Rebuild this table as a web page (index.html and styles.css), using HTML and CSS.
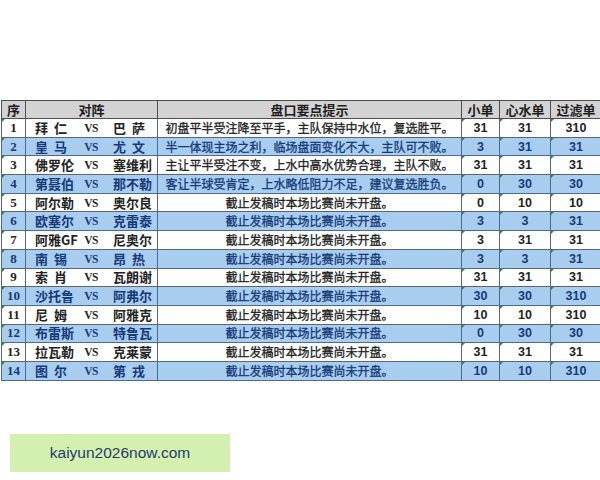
FILE: index.html
```html
<!DOCTYPE html>
<html lang="zh">
<head>
<meta charset="utf-8">
<link rel="stylesheet" href="styles.css">
</head>
<body>
<div class="page">
  <table class="sheet">
    <colgroup>
      <col class="c-no"><col class="c-team"><col class="c-tip"><col class="c-a"><col class="c-b"><col class="c-c">
    </colgroup>
    <thead>
      <tr><th>序</th><th>对阵</th><th>盘口要点提示</th><th>小单</th><th>心水单</th><th>过滤单</th></tr>
    </thead>
    <tbody>
      <tr><td class="no">1</td><td><div class="match"><span class="tm">拜仁</span><span class="vs">VS</span><span class="tm">巴萨</span></div></td><td class="tip">初盘平半受注降至平手，主队保持中水位，复选胜平。</td><td class="n">31</td><td class="n">31</td><td class="n">310</td></tr>
      <tr class="alt"><td class="no">2</td><td><div class="match"><span class="tm">皇马</span><span class="vs">VS</span><span class="tm">尤文</span></div></td><td class="tip">半一体现主场之利，临场盘面变化不大，主队可不败。</td><td class="n">3</td><td class="n">31</td><td class="n">31</td></tr>
      <tr><td class="no">3</td><td><div class="match"><span class="tm">佛罗伦</span><span class="vs">VS</span><span class="tm">塞维利</span></div></td><td class="tip">主让平半受注不变，上水中高水优势合理，主队不败。</td><td class="n">31</td><td class="n">31</td><td class="n">31</td></tr>
      <tr class="alt"><td class="no">4</td><td><div class="match"><span class="tm">第聂伯</span><span class="vs">VS</span><span class="tm">那不勒</span></div></td><td class="tip">客让半球受肯定，上水略低阻力不足，建议复选胜负。</td><td class="n">0</td><td class="n">30</td><td class="n">30</td></tr>
      <tr><td class="no">5</td><td><div class="match"><span class="tm">阿尔勒</span><span class="vs">VS</span><span class="tm">奥尔良</span></div></td><td class="tip">截止发稿时本场比赛尚未开盘。</td><td class="n">0</td><td class="n">10</td><td class="n">10</td></tr>
      <tr class="alt"><td class="no">6</td><td><div class="match"><span class="tm">欧塞尔</span><span class="vs">VS</span><span class="tm">克雷泰</span></div></td><td class="tip">截止发稿时本场比赛尚未开盘。</td><td class="n">3</td><td class="n">3</td><td class="n">31</td></tr>
      <tr><td class="no">7</td><td><div class="match"><span class="tm">阿雅GF</span><span class="vs">VS</span><span class="tm">尼奥尔</span></div></td><td class="tip">截止发稿时本场比赛尚未开盘。</td><td class="n">3</td><td class="n">31</td><td class="n">31</td></tr>
      <tr class="alt"><td class="no">8</td><td><div class="match"><span class="tm">南锡</span><span class="vs">VS</span><span class="tm">昂热</span></div></td><td class="tip">截止发稿时本场比赛尚未开盘。</td><td class="n">3</td><td class="n">3</td><td class="n">31</td></tr>
      <tr><td class="no">9</td><td><div class="match"><span class="tm">索肖</span><span class="vs">VS</span><span class="tm">瓦朗谢</span></div></td><td class="tip">截止发稿时本场比赛尚未开盘。</td><td class="n">31</td><td class="n">31</td><td class="n">31</td></tr>
      <tr class="alt"><td class="no">10</td><td><div class="match"><span class="tm">沙托鲁</span><span class="vs">VS</span><span class="tm">阿弗尔</span></div></td><td class="tip">截止发稿时本场比赛尚未开盘。</td><td class="n">30</td><td class="n">30</td><td class="n">310</td></tr>
      <tr><td class="no">11</td><td><div class="match"><span class="tm">尼姆</span><span class="vs">VS</span><span class="tm">阿雅克</span></div></td><td class="tip">截止发稿时本场比赛尚未开盘。</td><td class="n">10</td><td class="n">10</td><td class="n">310</td></tr>
      <tr class="alt"><td class="no">12</td><td><div class="match"><span class="tm">布雷斯</span><span class="vs">VS</span><span class="tm">特鲁瓦</span></div></td><td class="tip">截止发稿时本场比赛尚未开盘。</td><td class="n">0</td><td class="n">30</td><td class="n">30</td></tr>
      <tr><td class="no">13</td><td><div class="match"><span class="tm">拉瓦勒</span><span class="vs">VS</span><span class="tm">克莱蒙</span></div></td><td class="tip">截止发稿时本场比赛尚未开盘。</td><td class="n">31</td><td class="n">31</td><td class="n">31</td></tr>
      <tr class="alt"><td class="no">14</td><td><div class="match"><span class="tm">图尔</span><span class="vs">VS</span><span class="tm">第戎</span></div></td><td class="tip">截止发稿时本场比赛尚未开盘。</td><td class="n">10</td><td class="n">10</td><td class="n">310</td></tr>
    </tbody>
  </table>
  <div class="badge">kaiyun2026now.com</div>
</div>
</body>
</html>
```

FILE: styles.css
```css
html, body {
  margin: 0;
  padding: 0;
  background: #ffffff;
}
.page {
  width: 600px;
  height: 480px;
  padding-top: 100px;
  box-sizing: border-box;
  overflow: hidden;
}
.sheet {
  margin-left: 1px;
  width: 600px;
  border-collapse: collapse;
  table-layout: fixed;
  font-family: "Noto Sans CJK SC", "Liberation Sans", sans-serif;
  font-weight: 700;
  font-size: 12px;
  color: #232323;
}
.c-no { width: 24px; }
.c-team { width: 132px; }
.c-tip { width: 304px; }
.c-a { width: 38px; }
.c-b { width: 51px; }
.c-c { width: 51px; }
.sheet th, .sheet td {
  border: 1px solid #5d6670;
  padding: 0;
  line-height: 16px;
  height: 17.7px;
  white-space: nowrap;
  overflow: hidden;
  position: relative;
}
.sheet th {
  background: #d3d3d3;
  font-size: 13px;
  color: #1e1e1e;
  height: 17px;
  border-color: #4e4e4e;
}
.sheet tbody tr.alt td {
  background: #a9cdef;
  color: #163a78;
  border-color: #4a6c92;
}
.no {
  text-align: center;
  font-family: "Liberation Serif", serif;
  font-size: 13px;
}
.match {
  display: grid;
  grid-template-columns: 50px 30px 46px;
  justify-items: center;
  align-items: center;
}
.tm {
  display: inline-block;
  width: 32px;
  text-align: justify;
  text-align-last: justify;
  font-size: 13px;
}
.vs {
  font-family: "Liberation Serif", serif;
  font-size: 11.5px;
  letter-spacing: -0.5px;
}
.tip {
  text-align: center;
  font-weight: 400;
  font-size: 12px;
  -webkit-text-stroke: 0.3px currentColor;
}
.n {
  text-align: center;
  font-family: "Liberation Sans", sans-serif;
  font-size: 12.5px;
}
.n::before, .no::before {
  content: "";
  position: absolute;
  left: 0;
  top: 0;
  border-top: 3px solid #2f8a3a;
  border-right: 3px solid transparent;
}
.badge {
  margin: 53px 0 0 10px;
  width: 220px;
  height: 38px;
  background: #d4f0b0;
  color: #27396e;
  font-family: "Liberation Sans", sans-serif;
  font-size: 15.5px;
  line-height: 38px;
  text-align: center;
}
```
